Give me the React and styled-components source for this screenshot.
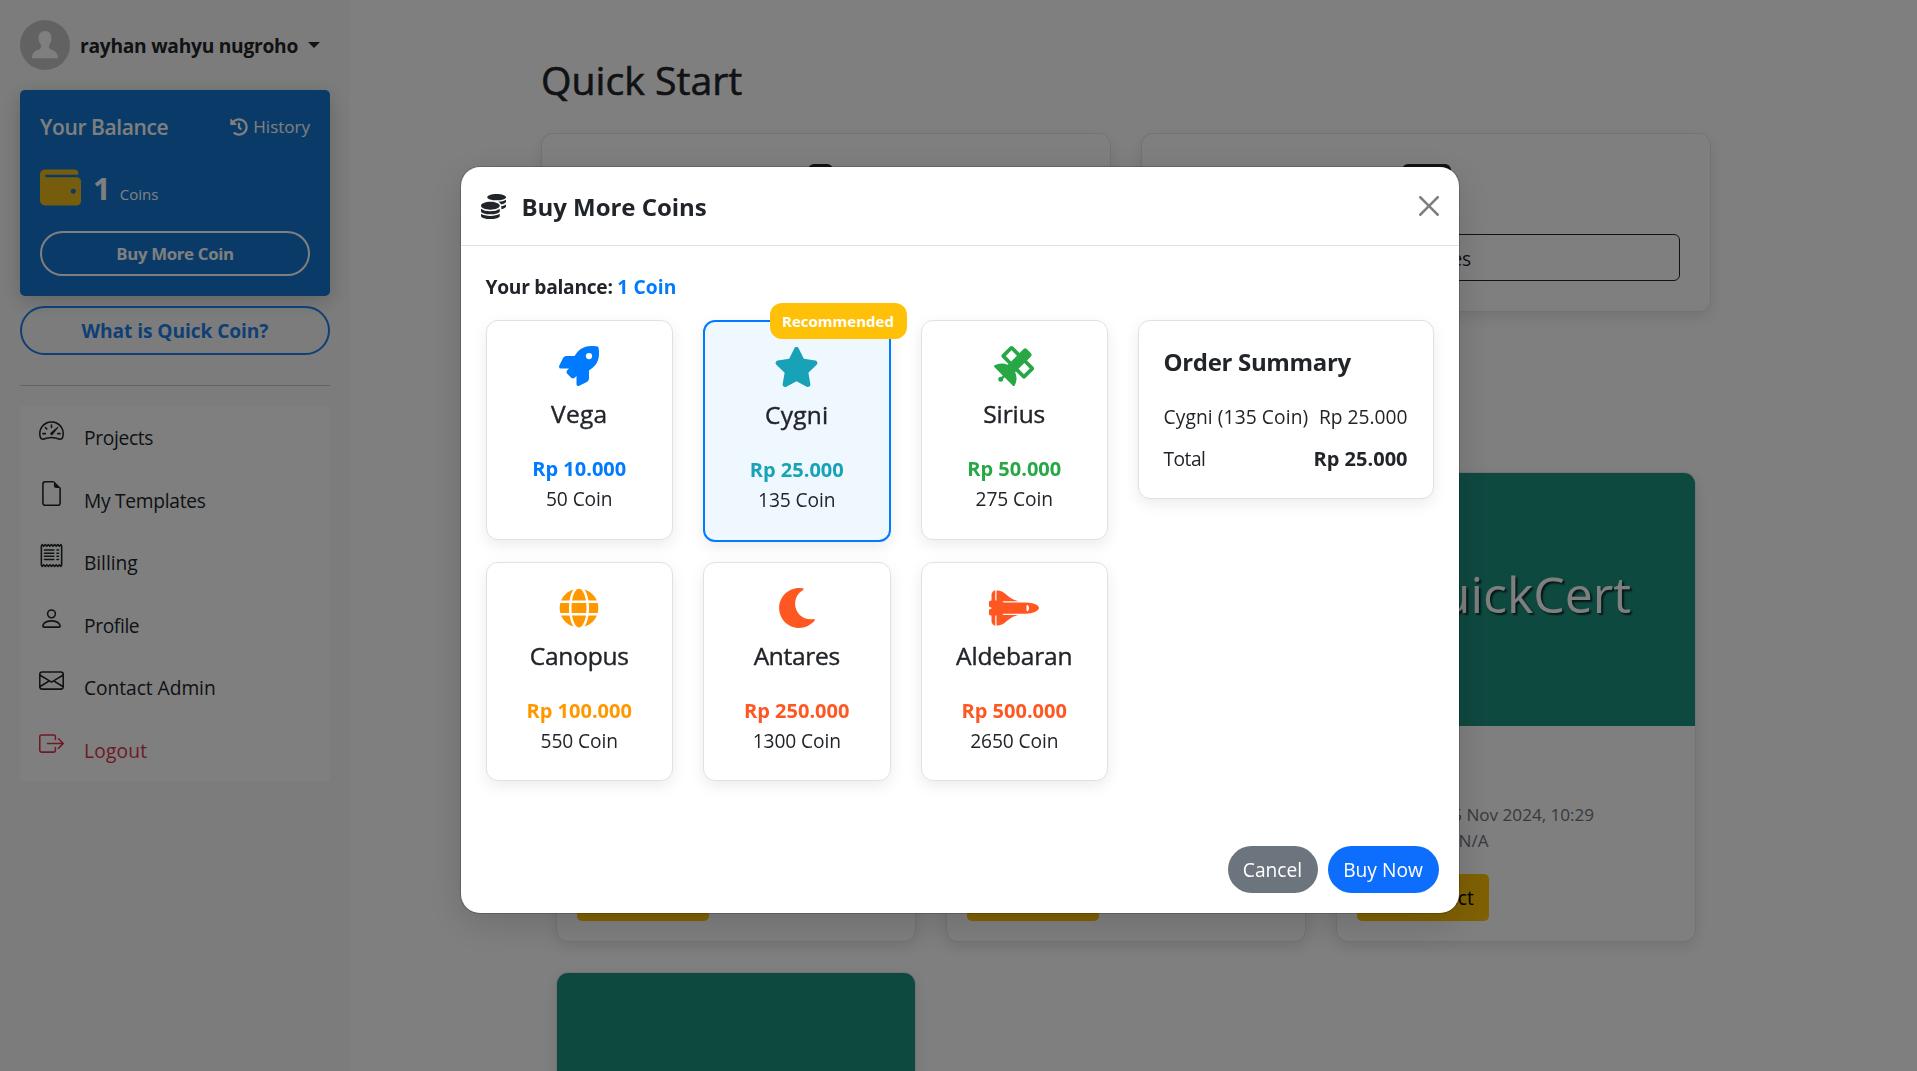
import React from "react";
import styled, { createGlobalStyle } from "styled-components";
import { FaRocket, FaStar, FaSatellite, FaGlobe, FaMoon, FaSpaceShuttle, FaCoins, FaWallet, FaHistory } from "react-icons/fa";
import { BsSpeedometer2, BsReceipt, BsPerson, BsEnvelope, BsBoxArrowRight } from "react-icons/bs";

const Global = createGlobalStyle`
  *, *::before, *::after { box-sizing: border-box; }
  body {
    margin: 0;
    background: #fff;
    color: #212529;
    font: 400 19.2px/30px "Open Sans", "Noto Sans", sans-serif;
    height: 1071px;
    overflow: hidden;
  }
  button { font-family: inherit; }
  h2, h3, h4, h5, p { margin: 0; }
  svg { display: block; flex: none; }
`;

/* Single-line text run with adjustable tracking */
const T = styled.span`
  letter-spacing: ${(p) => p.$ls || 0}px;
  white-space: nowrap;
`;

const Page = styled.div`
  display: flex;
  height: 1071px;
  overflow: hidden;
`;

const Sidebar = styled.aside`
  width: 350px;
  flex: none;
  padding: 20px;
  background: #f8f9fa;
`;

const User = styled.div`
  display: flex;
  align-items: center;
  height: 50px;
  font-weight: 700;
`;
const UserName = styled(T)`
  margin: 2px 0 0 10px;
`;
const Caret = styled.i`
  margin-left: 10px;
  border: 6px solid transparent;
  border-top-color: currentColor;
  border-bottom: 0;
`;

const Balance = styled.section`
  margin-top: 20px;
  height: 206px;
  padding: 20px;
  border-radius: 5px;
  background: #1577d0;
  color: #fff;
  box-shadow: 0 5px 20px rgba(0, 0, 0, 0.2);
`;
const BalanceHead = styled.div`
  display: flex;
  justify-content: space-between;
  align-items: center;
  height: 34px;
  font-size: 21px;
  font-weight: 600;
`;
const History = styled.span`
  display: flex;
  align-items: center;
  gap: 5px;
  font-size: 17px;
  font-weight: 400;
`;
const Amount = styled.div`
  display: flex;
  align-items: flex-start;
  height: 87px;
  padding-top: 23px;
`;
const CountLine = styled.div`
  display: flex;
  align-items: baseline;
  gap: 9px;
  margin: -2px 0 0 12px;
`;
const Count = styled.strong`
  font-size: 31px;
  line-height: 46px;
`;
const Unit = styled.span`
  font-size: 15px;
`;
const PillOutline = styled.button`
  display: block;
  width: 100%;
  height: ${(p) => p.$h}px;
  margin-top: ${(p) => p.$top || 0}px;
  padding: 0;
  border: 2px solid ${(p) => p.$color};
  border-radius: 25px;
  background: transparent;
  color: ${(p) => p.$color};
  font-size: ${(p) => p.$size}px;
  font-weight: 700;
`;
const Rule = styled.hr`
  margin: 30px 0 20px;
  border: 0;
  border-top: 1px solid #c7c8c9;
`;

const Menu = styled.nav`
  background: #fff;
  height: 375px;
`;
const MenuItem = styled.a`
  display: flex;
  height: 62.5px;
  padding: 12px 0 0 19px;
  color: ${(p) => p.$color || "#212529"};
`;
const MenuLabel = styled(T)`
  margin: 5px 0 0 20px;
`;

const Main = styled.main`
  flex: 1;
  padding: 55px 206px 0 191px;
`;
const Title = styled.h2`
  font-size: 39.2px;
  font-weight: 400;
  line-height: 50px;
  -webkit-text-stroke: 0.6px currentColor;
`;
const StartRow = styled.div`
  display: grid;
  grid-template-columns: 570px 570px;
  gap: 30px;
  margin-top: 28px;
`;
const Card = styled.article`
  border: 1px solid #e6e6e6;
  border-radius: 12px;
  background: #fff;
  box-shadow: 0 5px 15px rgba(0, 0, 0, 0.1);
  overflow: hidden;
`;
const StartCard = styled(Card)`
  display: flex;
  flex-direction: column;
  align-items: center;
  justify-content: space-between;
  height: 179px;
  padding: 30px;
`;
const StartIcon = styled.div`
  width: ${(p) => p.$w}px;
  height: 40px;
  margin-right: ${(p) => p.$shift || 0}px;
  border-radius: 6px;
  background: #212529;
`;
const StartButton = styled.button`
  width: 100%;
  height: 47px;
  padding: 2px 0 0;
  border: 1px solid #212529;
  border-radius: 6px;
  background: transparent;
  color: #212529;
  font-size: 19.2px;
`;
const Projects = styled.div`
  display: grid;
  grid-template-columns: repeat(3, 360px);
  gap: 30px;
  margin: 160px 15px 0;
`;
const Project = styled(Card)`
  height: 470px;
`;
const Cover = styled.div`
  display: flex;
  align-items: center;
  justify-content: center;
  height: 253px;
  padding-bottom: 11px;
  background: #1d9280;
  color: #fff;
  font-size: 50px;
  line-height: 1;
  text-shadow: 2px 2px 2px rgba(0, 0, 0, 0.7);
`;
const ProjectBody = styled.div`
  padding: 76px 20px 0;
  color: #6c757d;
  font-size: 17.1px;
  line-height: 26px;
`;
const Yellow = styled.button`
  display: block;
  width: 132px;
  height: 47px;
  margin-top: 20px;
  padding: 0;
  border: 0;
  border-radius: 5px;
  background: #ffc107;
  color: #000;
  font-size: 19.2px;
`;

const Backdrop = styled.div`
  position: fixed;
  inset: 0;
  display: flex;
  justify-content: center;
  align-items: flex-start;
  padding: 167px 0 0 2px;
  background: rgba(0, 0, 0, 0.5);
`;
const Dialog = styled.div`
  display: flex;
  flex-direction: column;
  width: 998px;
  height: 746px;
  border-radius: 19px;
  background: #fff;
  box-shadow: 0 10px 38px rgba(0, 0, 0, 0.15), 0 0 0 1px rgba(0, 0, 0, 0.18);
`;
const DialogHead = styled.header`
  display: flex;
  align-items: center;
  height: 79px;
  padding: 0 20px;
  border-bottom: 1px solid #dee2e6;
`;
const DialogTitle = styled.h4`
  flex: 1;
  margin: 1px 0 0 16px;
  font-size: 24px;
  font-weight: 700;
`;
const DialogBody = styled.div`
  flex: 1;
  padding: 25px;
`;
const BalanceLine = styled.p`
  height: 49px;
  font-weight: 700;
  line-height: 32px;
`;
const Accent = styled.span`
  color: #007bff;
  letter-spacing: 0.1px;
`;
const Columns = styled.div`
  display: flex;
  align-items: flex-start;
  gap: 30px;
`;
const Plans = styled.div`
  display: grid;
  grid-template-columns: repeat(3, 187.5px);
  align-items: start;
  gap: 20px 30px;
`;
const panel = `
  border: 1px solid #dee2e6;
  border-radius: 12px;
  background: #fff;
  box-shadow: 0 5px 15px rgba(0, 0, 0, 0.08);
`;
const Plan = styled.div`
  ${panel}
  position: relative;
  display: flex;
  flex-direction: column;
  align-items: center;
  height: 219.5px;
  padding-top: 25px;
  ${(p) => p.$active && "height: 221.5px; border: 2px solid #007bff; background: #f0f8ff;"}

  > svg {
    width: ${(p) => p.$iconWidth}px;
    height: 40px;
  }
`;
const PlanName = styled.h5`
  margin-top: 13px;
  font-size: 24.5px;
  font-weight: 400;
  line-height: 30px;
  -webkit-text-stroke: 0.4px currentColor;
`;
const Price = styled.div`
  margin-top: 25px;
  font-size: 20px;
  font-weight: 700;
  line-height: 30px;
  color: ${(p) => p.$color};
`;
const Coins = styled.div`
  line-height: 30px;
`;
const Badge = styled.span`
  position: absolute;
  top: -19px;
  right: -18px;
  width: 137px;
  height: 36px;
  border-radius: 12px;
  background: #ffc107;
  color: #fff;
  font-size: 15px;
  font-weight: 700;
  line-height: 36px;
  text-align: center;
`;
const Summary = styled.div`
  ${panel}
  width: 295.5px;
  height: 179px;
  padding: 25px 25px 25px 24.5px;
`;
const SummaryTitle = styled.h5`
  margin-bottom: 24px;
  font-size: 24px;
  font-weight: 700;
  line-height: 32px;
`;
const SummaryRow = styled.div`
  display: flex;
  justify-content: space-between;
  height: 42px;
`;
const Total = styled.strong`
  font-size: 20px;
`;
const Actions = styled.footer`
  display: flex;
  justify-content: flex-end;
  gap: 10px;
  padding: 0 20px 20px;
`;
const Pill = styled.button`
  width: ${(p) => p.$w}px;
  height: 47px;
  padding: 0;
  border: 0;
  border-radius: 24px;
  background: ${(p) => p.$bg};
  color: #fff;
  font-size: 19.2px;
`;

const Avatar = () => (
  <svg width="50" height="50" viewBox="0 0 50 50">
    <circle cx="25" cy="25" r="25" fill="#c4c4c4" />
    <path fill="#fff" d="M25 11c4 0 6.500 3 6.500 7 0 3-1.300 5.500-2.600 7v2.200c0 1.300 1 1.600 3 2.500 3.500 1.500 6.100 3.500 6.100 8.500H12c0-5 2.600-7 6.100-8.500 2-.9 3-1.200 3-2.500V25c-1.300-1.500-2.600-4-2.600-7 0-4 2.500-7 6.500-7Z" />
  </svg>
);
const Close = () => (
  <svg width="20" height="20" viewBox="0 0 16 16" fill="#000" opacity=".5">
    <path d="M.293.293a1 1 0 0 1 1.414 0L8 6.586 14.293.293a1 1 0 1 1 1.414 1.414L9.414 8l6.293 6.293a1 1 0 0 1-1.414 1.414L8 9.414l-6.293 6.293a1 1 0 0 1-1.414-1.414L6.586 8 .293 1.707a1 1 0 0 1 0-1.414z" />
  </svg>
);
const FileIcon = ({ size }) => (
  <svg width={size} height={size} viewBox="0 0 16 16" fill="currentColor">
    <path d="M4 0h5.500v1H4a1 1 0 0 0-1 1v12a1 1 0 0 0 1 1h8a1 1 0 0 0 1-1V4.500h1V14a2 2 0 0 1-2 2H4a2 2 0 0 1-2-2V2a2 2 0 0 1 2-2z" />
    <path d="M9.500 3V0L14 4.500h-3A1.500 1.500 0 0 1 9.500 3z" />
  </svg>
);

const menu = [
  ["Projects", BsSpeedometer2, -0.33],
  ["My Templates", FileIcon, -0.28],
  ["Billing", BsReceipt, -0.06],
  ["Profile", BsPerson, -0.37],
  ["Contact Admin", BsEnvelope, -0.04],
  ["Logout", BsBoxArrowRight, 0.2, "#dc3545"],
];
const plans = [
  ["Vega", FaRocket, "#007bff", "10.000", 50, 0.25, 40],
  ["Cygni", FaStar, "#17a2b8", "25.000", 135, 0.25, 45],
  ["Sirius", FaSatellite, "#28a745", "50.000", 275, -0.1, 40],
  ["Canopus", FaGlobe, "#ff9800", "100.000", 550, -0.2, 40],
  ["Antares", FaMoon, "#ff5722", "250.000", 1300, -0.3, 40],
  ["Aldebaran", FaSpaceShuttle, "#ff5722", "500.000", 2650, -0.15, 50],
];

export default function App() {
  return (
    <>
      <Global />
      <Page>
        <Sidebar>
          <User>
            <Avatar />
            <UserName $ls={-0.26}>rayhan wahyu nugroho</UserName>
            <Caret />
          </User>
          <Balance>
            <BalanceHead>
              <T $ls={-0.4}>Your Balance</T>
              <History><FaHistory size={18} /><T>History</T></History>
            </BalanceHead>
            <Amount>
              <FaWallet size={41} color="#ecba1c" />
              <CountLine>
                <Count>1</Count>
                <Unit>Coins</Unit>
              </CountLine>
            </Amount>
            <PillOutline $h={45} $color="#fff" $size={16.8}><T $ls={-0.3}>Buy More Coin</T></PillOutline>
          </Balance>
          <PillOutline $h={49} $top={10} $color="#1e7fe8" $size={19.2}><T $ls={-0.1}>What is Quick Coin?</T></PillOutline>
          <Rule />
          <Menu>
            {menu.map(([label, Icon, ls, color]) => (
              <MenuItem key={label} $color={color}>
                <Icon size={25} />
                <MenuLabel $ls={ls}>{label}</MenuLabel>
              </MenuItem>
            ))}
          </Menu>
        </Sidebar>
        <Main>
          <Title><T>Quick Start</T></Title>
          <StartRow>
            <StartCard><StartIcon $w={25} $shift={11} /><StartButton>New Project</StartButton></StartCard>
            <StartCard><StartIcon $w={49} /><StartButton><T $ls={-0.4}>Templates</T></StartButton></StartCard>
          </StartRow>
          <Projects>
            {[0, 1, 2].map((i) => (
              <Project key={i}>
                <Cover><T>QuickCert</T></Cover>
                <ProjectBody>
                  <div><T $ls={-0.5}>Created at: 1</T><T>5 Nov 2024, 10:29</T></div>
                  <div><T $ls={0.3}>Updated at: </T><T>N/A</T></div>
                  <Yellow>Edit Project</Yellow>
                </ProjectBody>
              </Project>
            ))}
            <Project>
              <Cover />
            </Project>
          </Projects>
        </Main>
      </Page>
      <Backdrop>
        <Dialog>
          <DialogHead>
            <FaCoins size={25} />
            <DialogTitle><T $ls={-0.05}>Buy More Coins</T></DialogTitle>
            <Close />
          </DialogHead>
          <DialogBody>
            <BalanceLine><T $ls={-0.27}>Your balance: <Accent>1 Coin</Accent></T></BalanceLine>
            <Columns>
              <Plans>
                {plans.map(([name, Icon, color, price, coins, ls, iconWidth]) => (
                  <Plan key={name} $active={name === "Cygni"} $iconWidth={iconWidth}>
                    <Icon size={40} color={color} />
                    <PlanName><T $ls={ls}>{name}</T></PlanName>
                    <Price $color={color}><T>Rp {price}</T></Price>
                    <Coins><T $ls={-0.1}>{coins} Coin</T></Coins>
                    {name === "Cygni" && <Badge>Recommended</Badge>}
                  </Plan>
                ))}
              </Plans>
              <Summary>
                <SummaryTitle><T $ls={-0.33}>Order Summary</T></SummaryTitle>
                <SummaryRow><T $ls={0.1}>Cygni (135 Coin)</T><T>Rp 25.000</T></SummaryRow>
                <SummaryRow><T $ls={-0.5}>Total</T><Total>Rp 25.000</Total></SummaryRow>
              </Summary>
            </Columns>
          </DialogBody>
          <Actions>
            <Pill $w={90} $bg="#6c757d"><T>Cancel</T></Pill>
            <Pill $w={111} $bg="#0d6efd"><T>Buy Now</T></Pill>
          </Actions>
        </Dialog>
      </Backdrop>
    </>
  );
}
